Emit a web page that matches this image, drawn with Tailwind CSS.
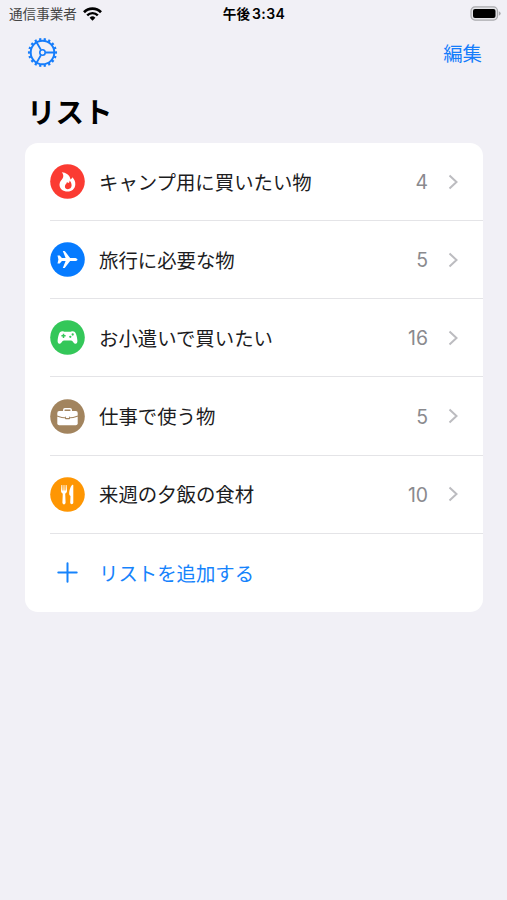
<!DOCTYPE html>
<html lang="ja">
<head>
  <meta charset="UTF-8">
  <meta name="viewport" content="width=device-width, initial-scale=1.0">
  <title>リスト</title>
  <script src="https://cdn.jsdelivr.net/npm/@tailwindcss/browser@4"></script>
</head>
<body class="h-screen overflow-hidden bg-[#f1f0f6] font-['Inter','Noto_Sans_CJK_JP',sans-serif] text-black">

  <!-- Status bar -->
  <header class="grid h-[27px] grid-cols-3 items-center pr-[6px] pl-[9px] text-[13.6px] leading-none">
    <div class="flex items-center gap-[6px]">
      <span class="pt-[2px] text-[#444]">通信事業者</span>
      <svg class="h-[14px] w-[19px]" viewBox="0 0 19 14">
        <path d="M1 5.200a12 12 0 0 1 17 0" fill="none" stroke="#000" stroke-width="2.700" />
        <path d="M4.200 8.300a7.500 7.500 0 0 1 10.600 0" fill="none" stroke="#000" stroke-width="2.400" />
        <path d="M6.600 10.800a4.100 4.100 0 0 1 5.800 0L9.500 13.700z" />
      </svg>
    </div>
    <div class="-ml-[2px] pt-[2px] text-center text-[13.6px] font-bold whitespace-nowrap">午後<span class="ml-[2px] text-[14px] font-semibold tracking-[0.4px]">3:34</span></div>
    <svg class="h-[15px] w-[31px] justify-self-end" viewBox="0 0 31 15">
      <rect x="1" y=".9" width="26.500" height="13.200" rx="4" fill="#e4e4e8" stroke="#a9a9ad" stroke-width="1.200" />
      <rect x="3" y="3" width="22.500" height="9" rx="2" />
      <path d="M28.800 5.200q1.900.7 1.900 2.300t-1.900 2.300z" fill="#a9a9ad" />
    </svg>
  </header>

  <!-- Navigation -->
  <nav class="flex h-[52px] items-center justify-between pr-[25px] pl-[27px] text-[#167dfb]">
    <button class="-mt-px">
      <svg class="size-[31px]" viewBox="-15.500 -15.500 31 31" fill="none" stroke="currentColor">
        <circle r="13.400" stroke-width="2.300" pathLength="180" stroke-dasharray="4.800 5.200" stroke-dashoffset="2.400" />
        <circle r="11.800" stroke-width="2" />
        <circle r="2.700" stroke-width="1.600" />
        <path d="M3.200 0H11.500M-1.600 2.800L-5.800 10M-1.600-2.800L-5.800-10" stroke-width="1.800" />
      </svg>
    </button>
    <button class="pt-[3px] text-[19.400px]">編集</button>
  </nav>

  <h1 class="flex h-[64px] items-center pt-1 pl-[27px] text-[28.500px] leading-none font-bold">リスト</h1>

  <!-- Lists -->
  <main class="mr-6 ml-[25px] grid h-[469px] grid-rows-6 rounded-[13px] bg-white pl-[24.500px] text-[19.400px] text-[#1c1c1e]">
    <div class="flex items-center border-b border-[#e4e4e7] pr-6">
      <svg class="size-[35px]" viewBox="0 0 35 35">
        <circle cx="17.500" cy="17.500" r="17.300" fill="#fb3b32" />
        <path d="M11.800 8.200c3.700.2 8.300 2.600 8.700 7.300 1-.4 1.500-1.200 1.700-2.200 2.100 1.900 3.300 4.300 3.100 7.100-.2 4.200-3.400 7.100-7.700 7.100-4.600 0-8-2.700-8.100-6.800 0-3 2-4.300 3.200-6.400 1-1.900.8-4-.9-6.100z" fill="#fff" />
        <path d="M19.500 16.500c.2 1.200-.2 2-.8 2.600-.5-.5-1.200-.8-1.900-.8.2 1.500-1.900 2-1.900 4.100 0 1.700 1.300 2.800 3 2.800 2 0 3.600-1.400 3.700-3.600.1-2-.7-3.900-2.100-5.100z" fill="#fb3b32" />
      </svg>
      <span class="ml-[14.500px] flex-1 pt-[3px]">キャンプ用に買いたい物</span>
      <span class="pt-[2px] text-[#8a8a8e]">4</span>
      <svg class="ml-5 h-4 w-[11px]" viewBox="0 0 11 16" fill="none" stroke="#bcbcc0" stroke-width="2"><path d="M1.500 1.500L8.500 8l-7 6.500" /></svg>
    </div>

    <div class="flex items-center border-b border-[#e4e4e7] pr-6">
      <svg class="size-[35px]" viewBox="0 0 35 35">
        <circle cx="17.500" cy="17.500" r="17.300" fill="#067bff" />
        <path d="M27.500 17.500c0-1-1.600-1.600-3.200-1.600h-4.200l-5.200-6.600q-.3-.4-.8-.4h-1.300l2.800 7h-3.700L9.700 13.500H7.500l.9 4-.9 4h2.200l2.200-2.400h3.700l-2.800 7h1.300q.5 0 .8-.4l5.200-6.600h4.200c1.600 0 3.200-.6 3.200-1.600z" fill="#fff" />
      </svg>
      <span class="ml-[14.500px] flex-1 pt-[3px]">旅行に必要な物</span>
      <span class="pt-[2px] text-[#8a8a8e]">5</span>
      <svg class="ml-5 h-4 w-[11px]" viewBox="0 0 11 16" fill="none" stroke="#bcbcc0" stroke-width="2"><path d="M1.500 1.500L8.500 8l-7 6.500" /></svg>
    </div>

    <div class="flex items-center border-b border-[#e4e4e7] pr-6">
      <svg class="size-[35px]" viewBox="0 0 35 35">
        <circle cx="17.500" cy="17.500" r="17.300" fill="#34c759" />
        <path d="M12.500 11.200c.9 0 1.400.5 2.100.5h5.800c.7 0 1.200-.5 2.100-.5 2 0 3 1 3.600 3 .6 2 1.300 4.700 1.300 6.900 0 1.600-.6 2.700-1.900 2.700-1.800 0-2.700-3.400-4.400-3.400h-7.200c-1.700 0-2.600 3.400-4.400 3.400-1.300 0-1.900-1.100-1.900-2.700 0-2.200.7-4.900 1.300-6.900.6-2 1.600-3 3.600-3z" fill="#fff" />
        <path d="M13.500 13.700v4.200M11.400 15.800h4.200" stroke="#34c759" stroke-width="1.500" />
        <circle cx="22.700" cy="14.500" r="1.150" fill="#34c759" />
        <circle cx="20.300" cy="16.800" r="1.150" fill="#34c759" />
      </svg>
      <span class="ml-[14.500px] flex-1 pt-[3px]">お小遣いで買いたい</span>
      <span class="pt-[2px] text-[#8a8a8e]">16</span>
      <svg class="ml-5 h-4 w-[11px]" viewBox="0 0 11 16" fill="none" stroke="#bcbcc0" stroke-width="2"><path d="M1.500 1.500L8.500 8l-7 6.500" /></svg>
    </div>

    <div class="flex items-center border-b border-[#e4e4e7] pr-6">
      <svg class="size-[35px]" viewBox="0 0 35 35">
        <circle cx="17.500" cy="17.500" r="17.300" fill="#a2845e" />
        <path d="M13.800 12.500v-1.700q0-1.100 1.100-1.100h5.200q1.100 0 1.100 1.100v1.700" fill="none" stroke="#fff" stroke-width="1.500" />
        <rect x="7.300" y="12" width="20.400" height="14.200" rx="1.900" fill="#fff" />
        <path d="M7 17c3.200 1.500 6.500 2 10.500 2s7.300-.5 10.500-2" fill="none" stroke="#a2845e" stroke-width="1.100" />
        <rect x="15" y="17.400" width="5" height="2.800" rx=".8" fill="#a2845e" />
        <rect x="15.900" y="17" width="3.200" height="1.900" rx=".5" fill="#fff" />
      </svg>
      <span class="ml-[14.500px] flex-1 pt-[3px]">仕事で使う物</span>
      <span class="pt-[2px] text-[#8a8a8e]">5</span>
      <svg class="ml-5 h-4 w-[11px]" viewBox="0 0 11 16" fill="none" stroke="#bcbcc0" stroke-width="2"><path d="M1.500 1.500L8.500 8l-7 6.500" /></svg>
    </div>

    <div class="flex items-center border-b border-[#e4e4e7] pr-6">
      <svg class="size-[35px]" viewBox="0 0 35 35">
        <circle cx="17.500" cy="17.500" r="17.300" fill="#fe9603" />
        <path d="M11.400 8l-.4 5.700c0 1.600.7 2.300 1.800 2.900l-.4 9c0 2.400 3.200 2.400 3.200 0l-.4-9c1.100-.6 1.800-1.300 1.800-2.900L16.600 8h-.9l-.2 5.400h-.9L14.400 8h-.8l-.2 5.400h-.9L12.300 8z" fill="#fff" />
        <path d="M23.300 8.200v17.400c0 2.200-3.100 2.200-3.100 0l.3-6.700c-.9-.5-1.300-1-1.300-2.200 0-3.900 1.600-7.700 3.300-8.900q.8-.4.800.4z" fill="#fff" />
      </svg>
      <span class="ml-[14.500px] flex-1 pt-[3px]">来週の夕飯の食材</span>
      <span class="pt-[2px] text-[#8a8a8e]">10</span>
      <svg class="ml-5 h-4 w-[11px]" viewBox="0 0 11 16" fill="none" stroke="#bcbcc0" stroke-width="2"><path d="M1.500 1.500L8.500 8l-7 6.500" /></svg>
    </div>

    <button class="flex items-center text-left text-[#1683fc]">
      <svg class="size-[35px]" viewBox="0 0 35 35" fill="none" stroke="currentColor" stroke-width="2" stroke-linecap="round">
        <path d="M8.300 17.500h18.400M17.500 8.300v18.400" />
      </svg>
      <span class="ml-[14.500px] pt-[3px]">リストを追加する</span>
    </button>
  </main>

</body>
</html>
